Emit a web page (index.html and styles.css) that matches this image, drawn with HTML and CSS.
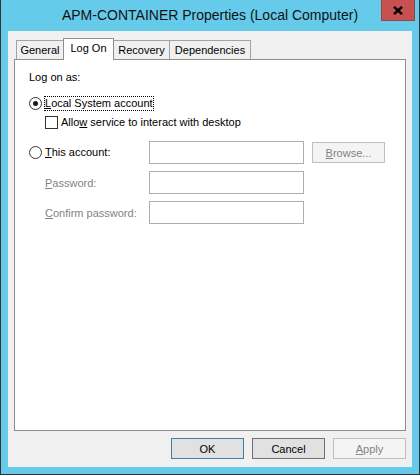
FILE: index.html
```html
<!DOCTYPE html>
<html lang="en">
	<head>
		<meta charset="UTF-8" />
		<title>APM-CONTAINER Properties (Local Computer)</title>
		<link rel="stylesheet" href="styles.css">
	</head>
	<body>
		<div class="window">
			<div class="titlebar">
				<span></span>
				<div class="title">APM-CONTAINER Properties (Local Computer)</div>
				<div class="close">
					<svg width="10" height="9" viewBox="0 0 10 9">
						<path d="M1 0.8 L9 8.2 M9 0.8 L1 8.2" stroke="#000" stroke-width="2.4" />
					</svg>
				</div>
			</div>

			<div class="client">
				<div class="tabs">
					<div class="tab tab-general">General</div>
					<div class="tab tab-logon active">Log On</div>
					<div class="tab tab-recovery">Recovery</div>
					<div class="tab tab-deps">Dependencies</div>
				</div>

				<div class="panel">
					<div class="group-label">Log on as:</div>

					<div class="opt opt-main">
						<span class="radio checked"></span>
						<span class="focus"><u>L</u>ocal System account</span>
					</div>
					<div class="opt opt-sub">
						<span class="check"></span>
						<span>Allo<u>w</u> service to interact with desktop</span>
					</div>

					<div class="account-grid">
						<div class="opt">
							<span class="radio"></span>
							<span class="opt-text"><u>T</u>his account:</span>
						</div>
						<input class="field" type="text" />
						<button class="btn" disabled><u>B</u>rowse...</button>

						<div class="field-label"><u>P</u>assword:</div>
						<input class="field" type="text" />
						<span></span>

						<div class="field-label"><u>C</u>onfirm password:</div>
						<input class="field" type="text" />
						<span></span>
					</div>
				</div>

				<div class="buttons">
					<button class="btn btn-default">OK</button>
					<button class="btn btn-normal">Cancel</button>
					<button class="btn" disabled><u>A</u>pply</button>
				</div>
			</div>
		</div>
	</body>
</html>
```

FILE: styles.css
```css
body {
	margin: 0;
	font-family: 'Liberation Sans', Arial, sans-serif;
	font-size: 11px;
	color: #000;
	background-color: #66cbea;
}
.window {
	width: 420px;
	height: 475px;
	box-sizing: border-box;
	border: 1px solid #333;
	border-top: none;
	background-color: #66cbea;
	display: flex;
	flex-direction: column;
}
.titlebar {
	height: 31px;
	display: grid;
	grid-template-columns: 1fr auto 1fr;
	align-items: start;
}
.title {
	font-size: 14px;
	line-height: 20px;
	padding-top: 5px;
	color: #111;
	white-space: nowrap;
}
.close {
	justify-self: end;
	margin-right: 4px;
	width: 34px;
	height: 21px;
	box-sizing: border-box;
	background-color: #c75050;
	border: 1px solid #8a4a48;
	border-top: none;
	display: flex;
	align-items: center;
	justify-content: center;
}
.client {
	margin: 0 7px;
	height: 436px;
	box-sizing: border-box;
	background-color: #f0f0f0;
	padding-top: 7px;
	display: flex;
	flex-direction: column;
}
.tabs {
	display: flex;
	align-items: flex-end;
	margin-left: 8px;
	height: 22px;
	margin-bottom: -1px;
	position: relative;
	z-index: 1;
}
.tab {
	box-sizing: border-box;
	height: 19px;
	margin-bottom: 1px;
	margin-right: -1px;
	border: 1px solid #a3a3a3;
	border-bottom: none;
	background-color: #f0f0f0;
	text-align: center;
	line-height: 14px;
	padding-top: 2px;
}
.tab-general {
	width: 48px;
}
.tab-logon {
	width: 51px;
}
.tab-recovery {
	width: 57px;
}
.tab-deps {
	width: 82px;
}
.tab.active {
	height: 22px;
	margin-bottom: 0;
	background-color: #fff;
	border-color: #8e8f8f;
	position: relative;
	z-index: 2;
}
.panel {
	margin: 0 6px;
	height: 372px;
	box-sizing: border-box;
	border: 1px solid #8e8f8f;
	background-color: #fff;
	padding: 10px 14px 0;
}
.group-label {
	line-height: 14px;
}
.opt {
	display: flex;
	align-items: center;
	height: 15px;
	line-height: 13px;
}
.opt-main {
	margin-top: 12px;
}
.opt-sub {
	margin-top: 4px;
	padding-left: 16px;
}
.radio,
.check {
	width: 13px;
	height: 13px;
	box-sizing: border-box;
	border: 1px solid #333;
	background-color: #fff;
	margin-right: 3px;
	flex-shrink: 0;
}
.radio {
	border-radius: 50%;
	display: flex;
	align-items: center;
	justify-content: center;
}
.radio.checked::after {
	content: '';
	width: 5px;
	height: 5px;
	border-radius: 50%;
	background-color: #1a1a1a;
}
.focus {
	outline: 1px dotted #000;
}
.account-grid {
	margin-top: 11px;
	display: grid;
	grid-template-columns: 112px 155px 73px;
	grid-auto-rows: 23px;
	column-gap: 8px;
	row-gap: 7px;
	align-items: center;
}
.field {
	width: 155px;
	height: 23px;
	box-sizing: border-box;
	margin: 0;
	padding: 0;
	border: 1px solid #abadb3;
	background-color: #fff;
}
.field-label {
	padding-left: 16px;
	color: #838383;
	line-height: 14px;
	white-space: nowrap;
}
.btn {
	width: 73px;
	height: 21px;
	box-sizing: border-box;
	margin: 0;
	padding: 0;
	font-family: 'Liberation Sans', Arial, sans-serif;
	font-size: 11px;
	color: #000;
	border: 1px solid #adadad;
	background-color: #e1e1e1;
}
.btn:disabled {
	color: #838383;
	border-color: #bfbfbf;
	background-color: #f4f4f4;
}
.btn-default {
	border-color: #3c7fb1;
}
.btn-normal {
	border-color: #707070;
}
.buttons {
	display: flex;
	justify-content: flex-end;
	gap: 8px;
	margin: 7px 6px 0;
}
```
